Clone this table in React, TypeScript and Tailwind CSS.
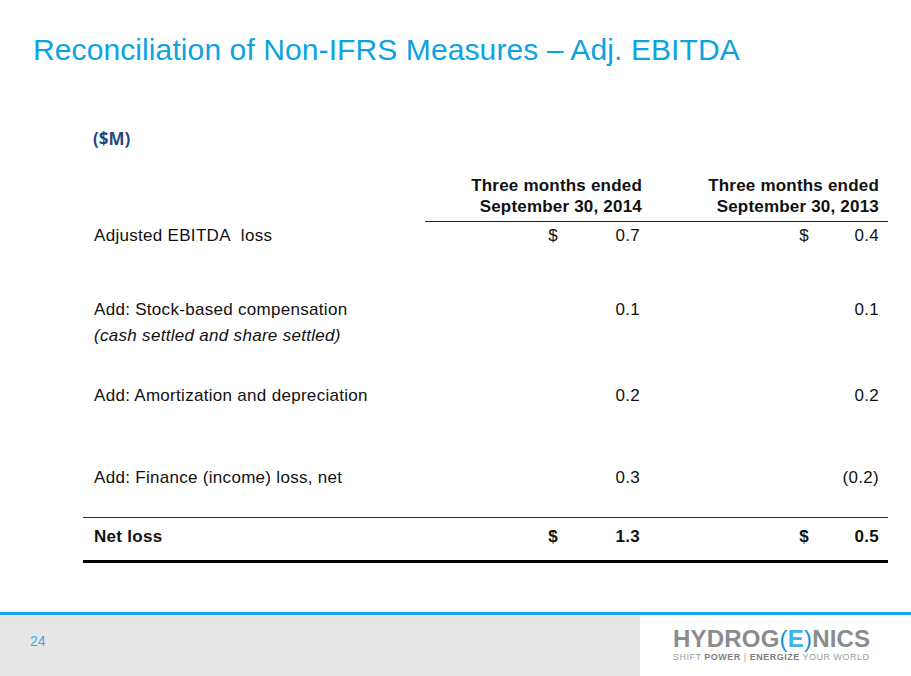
const rows = [
  { label: "Adjusted EBITDA\u00a0 loss", a: "0.7", b: "0.4", dollar: true, h: "h-[75px] pt-[1px]" },
  { label: "Add: Stock-based compensation", note: "(cash settled and share settled)", a: "0.1", b: "0.1", h: "h-[86px]" },
  { label: "Add: Amortization and depreciation", a: "0.2", b: "0.2", h: "h-[82px]" },
  { label: "Add: Finance (income) loss, net", a: "0.3", b: "(0.2)", h: "h-[53px] border-b border-[#333]" },
];

const Value = ({ v, dollar, wide }: { v: string; dollar?: boolean; wide: boolean }) => (
  <div className="flex justify-end">
    {dollar && <span>$</span>}
    <span className={`${wide ? "w-[82px]" : "w-[70px]"} text-right`}>{v}</span>
  </div>
);

const Logo = () => (
  <div className="pl-[33px] pt-[11px] text-[#8a8c8e]" style={{ fontFamily: "'Liberation Sans', Arial, sans-serif" }}>
    <div className="text-[24px] leading-[25px] font-bold tracking-[0.2px]">
      HYDROG<span className="text-[#1b8fd0] font-normal">(</span>
      <span className="text-[#3cb4ea]">E</span>
      <span className="text-[#1b8fd0] font-normal">)</span>NICS
    </div>
    <div className="text-[9px] leading-[12px] text-[#9a9c9e] tracking-[0.5px]">
      SHIFT <b className="text-[#7d7f81]">POWER</b> | <b className="text-[#7d7f81]">ENERGIZE</b> YOUR WORLD
    </div>
  </div>
);

export default function App() {
  return (
    <div
      className="w-[911px] h-[676px] bg-white flex flex-col overflow-hidden text-[#111]"
      style={{ fontFamily: "'Liberation Sans', Arial, sans-serif" }}
    >
      <div className="flex-1">
        <h1 className="pt-[32px] pl-[33px] text-[30px] leading-[36px] tracking-[0.1px] text-[#0ba3e0]">
          Reconciliation of Non-IFRS Measures – Adj. EBITDA
        </h1>
        <div
          className="mt-[61px] pl-[93px] text-[17px] leading-[20px] font-bold text-[#1f497d]"
          style={{ fontFamily: "'Open Sans', sans-serif" }}
        >
          ($M)
        </div>

        <div className="ml-[83px] w-[805px] mt-[26px] text-[17px] tracking-[0.3px]">
          <div className="grid grid-cols-[342px_225px_238px] font-bold leading-[21px] text-right tracking-[0.2px]">
            <div />
            <div className="pr-[8px] pb-[4px] border-b border-[#222]">
              Three months ended
              <br />
              September 30, 2014
            </div>
            <div className="pr-[9px] pb-[4px] border-b border-[#222]">
              Three months ended
              <br />
              September 30, 2013
            </div>
          </div>

          {rows.map((r) => (
            <div key={r.label} className={`grid grid-cols-[342px_225px_238px] leading-[26px] ${r.h}`}>
              <div className="pl-[11px]">
                <div className="whitespace-pre">{r.label}</div>
                {r.note && <div className="italic">{r.note}</div>}
              </div>
              <div className="pr-[10px]">
                <Value v={r.a} dollar={r.dollar} wide />
              </div>
              <div className="pr-[9px]">
                <Value v={r.b} dollar={r.dollar} wide={false} />
              </div>
            </div>
          ))}

          <div className="grid grid-cols-[342px_225px_238px] h-[45px] pt-[6px] leading-[26px] font-bold border-b-[3px] border-black">
            <div className="pl-[11px]">Net loss</div>
            <div className="pr-[10px]">
              <Value v="1.3" dollar wide />
            </div>
            <div className="pr-[9px]">
              <Value v="0.5" dollar wide={false} />
            </div>
          </div>
        </div>
      </div>

      <footer className="h-[64px] border-t-[3px] border-[#12a9e6] flex">
        <div className="w-[640px] bg-[#e6e6e6] pl-[30px] pt-[18px] text-[14px] leading-[16px] text-[#3aace0] font-light">
          24
        </div>
        <Logo />
      </footer>
    </div>
  );
}
